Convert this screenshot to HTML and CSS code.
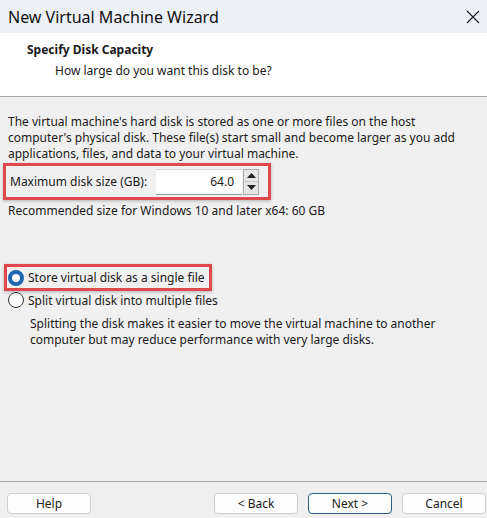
FILE: index.html
```html
<!DOCTYPE html>
<html>
<head>
<meta charset="utf-8">
<link rel="stylesheet" href="styles.css">
</head>
<body>
<div class="window">
  <div class="titlebar">
    <span class="title">New Virtual Machine Wizard</span>
    <svg class="close" width="14" height="14" viewBox="0 0 14 14"><path d="M1 1 L13 13 M13 1 L1 13" stroke="#1a1a1a" stroke-width="1.1" fill="none"/></svg>
  </div>
  <div class="header">
    <div class="h-title">Specify Disk Capacity</div>
    <div class="h-sub">How large do you want this disk to be?</div>
  </div>
  <div class="content">
    <p class="para">The virtual machine's hard disk is stored as one or more files on the host computer's physical disk. These file(s) start small and become larger as you add applications, files, and data to your virtual machine.</p>
    <div class="hl size-row">
      <span class="label">Maximum disk size (GB):</span>
      <div class="input">64.0</div>
      <div class="spin">
        <div class="spin-btn"><svg width="9" height="5" viewBox="0 0 9 5"><path d="M0 5 L4.5 0 L9 5 Z" fill="#222"/></svg></div>
        <div class="spin-btn"><svg width="9" height="5" viewBox="0 0 9 5"><path d="M0 0 L9 0 L4.5 5 Z" fill="#222"/></svg></div>
      </div>
    </div>
    <p class="rec">Recommended size for Windows 10 and later x64: 60 GB</p>
    <div class="hl radio-row hl-radio">
      <span class="radio checked"></span>
      <span>Store virtual disk as a single file</span>
    </div>
    <div class="radio-row plain">
      <span class="radio"></span>
      <span>Split virtual disk into multiple files</span>
    </div>
    <p class="desc">Splitting the disk makes it easier to move the virtual machine to another computer but may reduce performance with very large disks.</p>
  </div>
  <div class="footer">
    <button class="btn">Help</button>
    <div class="spacer"></div>
    <button class="btn">&lt; Back</button>
    <button class="btn primary">Next &gt;</button>
    <button class="btn">Cancel</button>
  </div>
</div>
</body>
</html>
```

FILE: styles.css
```css
html, body {
  margin: 0;
  padding: 0;
}
body {
  width: 487px;
  height: 518px;
  overflow: hidden;
  font-family: "Segoe UI", "Noto Sans", "Liberation Sans", sans-serif;
  font-size: 12px;
  color: #1a1a1a;
}
.window {
  width: 487px;
  height: 518px;
  display: flex;
  flex-direction: column;
  background: #f0f0f0;
}
.titlebar {
  height: 33px;
  background: #edf0f6;
  display: flex;
  align-items: center;
  justify-content: space-between;
  padding: 0 7px 0 8px;
  box-sizing: border-box;
}
.title {
  font-size: 16px;
  color: #111;
}
.header {
  height: 64px;
  background: #fff;
  border-bottom: 1px solid #a8a8a8;
  box-sizing: border-box;
  padding-top: 9px;
}
.h-title {
  font-weight: bold;
  margin-left: 27px;
  line-height: 16px;
}
.h-sub {
  margin-left: 55px;
  margin-top: 5px;
  line-height: 16px;
}
.content {
  flex: 1;
  padding: 17px 8px 0 8px;
  border-bottom: 1px solid #a8a8a8;
}
.para {
  margin: 0;
  line-height: 16px;
}
.hl {
  border: 3px solid #e0484d;
  box-shadow: 0 1px 3px rgba(0,0,0,0.25);
}
.size-row {
  margin: 1px 0 0 -5px;
  width: 258px;
  height: 31px;
  display: flex;
  align-items: center;
  padding-left: 4px;
}
.label {
  width: 146px;
}
.input {
  width: 86px;
  height: 26px;
  background: #fff;
  border-top: 1px solid #d9d9d9;
  border-bottom: 1px solid #9a9a9a;
  box-sizing: border-box;
  text-align: right;
  padding-right: 8px;
  line-height: 24px;
}
.spin {
  width: 16px;
  height: 26px;
  display: flex;
  flex-direction: column;
  border: 1px solid #adadad;
  box-sizing: border-box;
  margin-left: 1px;
  background: #e6e6e6;
}
.spin-btn {
  flex: 1;
  display: flex;
  align-items: center;
  justify-content: center;
}
.spin-btn + .spin-btn {
  border-top: 1px solid #c8c8c8;
}
.rec {
  margin: 3px 0 0 0;
  line-height: 16px;
}
.radio-row {
  display: flex;
  align-items: center;
  gap: 4px;
}
.hl-radio {
  margin: 45px 0 0 -4px;
  width: 201px;
  height: 21px;
  padding-left: 1px;
}
.plain {
  margin-top: -1px;
  height: 20px;
}
.radio {
  width: 16px;
  height: 16px;
  border-radius: 50%;
  box-sizing: border-box;
  border: 1px solid #333;
  background: #fff;
}
.radio.checked {
  border: 4px solid #1c66b3;
  background: #fff;
}
.desc {
  margin: 6px 0 0 22px;
  line-height: 16px;
}
.footer {
  height: 36px;
  display: flex;
  align-items: flex-start;
  padding: 11px 1px 0 7px;
  box-sizing: border-box;
  gap: 10px;
}
.spacer {
  flex: 1;
}
.btn {
  width: 84px;
  height: 21px;
  font: inherit;
  font-size: 12px;
  color: #1a1a1a;
  background: #fdfdfd;
  border: 1px solid #cfcfcf;
  border-radius: 4px;
  padding: 0;
}
.btn.primary {
  border-color: #2a5d8a;
}
```
